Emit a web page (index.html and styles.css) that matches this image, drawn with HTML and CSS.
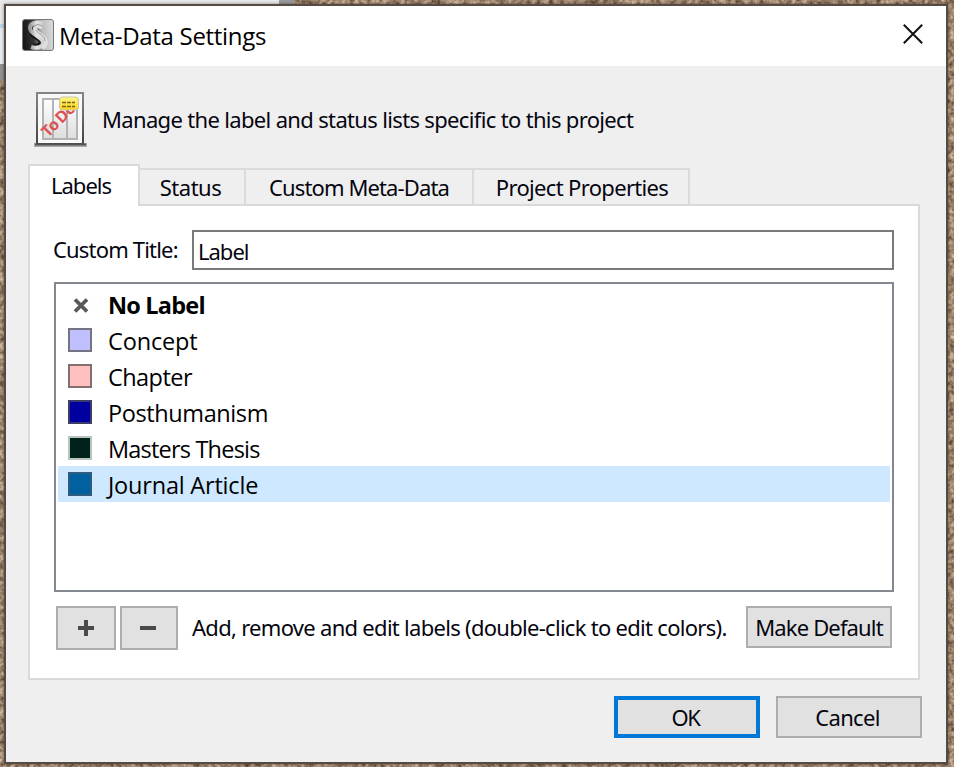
FILE: index.html
```html
<!DOCTYPE html>
<html lang="en">
<head>
<meta charset="utf-8">
<title>Meta-Data Settings</title>
<link rel="stylesheet" href="styles.css">
</head>
<body>
<svg class="cork" width="954" height="767" aria-hidden="true">
  <filter id="grain" x="0" y="0" width="100%" height="100%" color-interpolation-filters="sRGB">
    <feTurbulence type="fractalNoise" baseFrequency="0.22" numOctaves="3" seed="8"/>
    <feColorMatrix values="0.75 0 0 0 0.24  0.72 0 0 0 0.16  0.66 0 0 0 0.1  0 0 0 0 1"/>
  </filter>
  <rect width="954" height="767" filter="url(#grain)"/>
</svg>
<div class="behind"></div>
<main class="dialog">
  <header class="titlebar">
    <svg class="app-icon" width="32" height="32" viewBox="0 0 32 32">
      <defs>
        <linearGradient id="tile" x1="0" x2="1" y1=".55" y2=".45"><stop offset="0" stop-color="#151515"/><stop offset=".35" stop-color="#333"/><stop offset=".65" stop-color="#bcbcbc"/><stop offset="1" stop-color="#dadada"/></linearGradient>
        <linearGradient id="curl" x1="0" x2="1"><stop offset="0" stop-color="#999"/><stop offset=".5" stop-color="#e4e4e4"/><stop offset="1" stop-color="#ccc"/></linearGradient>
      </defs>
      <rect x=".5" y=".5" width="31" height="31" rx="2.5" fill="url(#tile)" stroke="#777"/>
      <path d="M9 14c3 4 10 5 10 9 0 3-3 5-8 4" fill="none" stroke="#151515" stroke-width="5"/>
      <path d="M21 5c-6-3-13-1-13 4 0 7 13 8 13 15 0 4-6 6-12 4" fill="none" stroke="url(#curl)" stroke-width="4"/>
      <path d="M20 9c-3-3-7-2-7 1 1 5 10 6 11 13 0 3-2 5-4 6" fill="none" stroke="#dedede" stroke-width="4"/>
      <path d="M12 8c2-3 6-3 9 0M14 11c2 4 9 5 9 11" fill="none" stroke="#999"/>
    </svg>
    <h1 class="title">Meta-Data Settings</h1>
    <svg class="close" width="20" height="20" viewBox="0 0 20 20"><path d="M.8.8 19.2 19.2M19.2.8.8 19.2" stroke="#111" stroke-width="2"/></svg>
  </header>

  <section class="intro">
    <svg class="todo-icon" width="56" height="58" viewBox="0 0 56 58">
      <defs>
        <linearGradient id="page" x2="0" y2="1"><stop stop-color="#fff"/><stop offset="1" stop-color="#ddd"/></linearGradient>
        <linearGradient id="frame" x2="0" y2="1"><stop stop-color="#858585"/><stop offset="1" stop-color="#444"/></linearGradient>
        <linearGradient id="note" x2="0" y2="1"><stop stop-color="#fff583"/><stop offset="1" stop-color="#ffd321"/></linearGradient>
      </defs>
      <path d="M2 55h53" stroke="#aaa" stroke-width="4"/>
      <rect x="5" y="3" width="46" height="51" fill="#f8f8f8" stroke="url(#frame)" stroke-width="2"/>
      <path d="M3 54.500h51" stroke="#555" stroke-width="2"/>
      <path d="M11 9h34v40H11zM21 9v40M35 9v40" fill="url(#page)" stroke="#b3b3b3" stroke-width="2"/>
      <text class="todo-text" transform="translate(16 48) rotate(-45)">To Do</text>
      <rect x="27.500" y="7" width="19" height="13" rx="3" fill="url(#note)" stroke="#c8c8a6"/>
      <path d="M30 12.500h13M30 16.500h13" stroke="#76640a" stroke-width="1.500" stroke-dasharray="4 1"/>
    </svg>
    <p class="intro-text">Manage the label and status lists specific to this project</p>
  </section>

  <nav class="tabs">
    <div class="tab tab-active"><span class="t-labels">Labels</span></div>
    <div class="tab tab-status"><span class="t-status">Status</span></div>
    <div class="tab tab-custom"><span class="t-custom">Custom Meta-Data</span></div>
    <div class="tab tab-project"><span class="t-project">Project Properties</span></div>
  </nav>

  <section class="panel">
    <div class="field">
      <label class="field-label" for="custom-title">Custom Title:</label>
      <div class="field-box" id="custom-title"><span>Label</span></div>
    </div>
    <ul class="list">
      <li class="row none"><svg class="mark" width="24" height="24" viewBox="0 0 24 24"><path d="M6 6.500 18 18.500M18 6.500 6 18.500" stroke="#585858" stroke-width="3.800"/></svg><span>No Label</span></li>
      <li class="row"><i class="swatch lilac"></i><span class="r-concept">Concept</span></li>
      <li class="row"><i class="swatch pink"></i><span class="r-chapter">Chapter</span></li>
      <li class="row"><i class="swatch navy"></i><span class="r-post">Posthumanism</span></li>
      <li class="row"><i class="swatch green"></i><span class="r-masters">Masters Thesis</span></li>
      <li class="row selected"><i class="swatch blue"></i><span class="r-journal">Journal Article</span></li>
    </ul>
    <div class="actions">
      <div class="button add"><svg width="16" height="16" viewBox="0 0 16 16"><path d="M0 8h16M8 0v16" stroke="#4a4a4a" stroke-width="4"/></svg></div>
      <div class="button remove"><svg width="16" height="16" viewBox="0 0 16 16"><path d="M0 8h16" stroke="#4a4a4a" stroke-width="4"/></svg></div>
      <p class="hint">Add, remove and edit labels (double-click to edit colors).</p>
      <div class="button default"><span>Make Default</span></div>
    </div>
  </section>

  <footer class="footer">
    <div class="button ok"><span>OK</span></div>
    <div class="button cancel"><span>Cancel</span></div>
  </footer>
</main>
</body>
</html>
```
FILE: styles.css
```css
* { box-sizing: border-box; }
body {
  margin: 0;
  width: 954px;
  height: 767px;
  padding: 4px 0 0 4px;
  overflow: hidden;
  background: #947a64;
  font: 22px/30px "Noto Sans", "Open Sans", sans-serif;
  color: #050510;
}
h1, p, ul { margin: 0; padding: 0; font-weight: 400; }
span, p, h1, label { white-space: nowrap; }
svg { display: block; flex: none; }
.cork { position: absolute; left: 0; top: 0; }
.behind {
  position: absolute; left: 0; top: 0; width: 294px; height: 80px;
  border-right: 15px solid #999;
  border-bottom: 16px solid #929292;
  background: linear-gradient(#e8e8e8 0 24px, #b9d5e7 24px 28px, #e5eaf0 28px);
}
.dialog {
  position: relative;
  width: 944px; height: 760px;
  border: 2px solid #554b43;
  background: #efefef;
  box-shadow: 0 0 3px rgba(0, 0, 0, .45);
}
.titlebar { display: flex; height: 60px; padding: 13px 23px 0 16px; background: #fff; }
.title { margin: 0 auto 0 5px; font: 24px/34px "Open Sans", sans-serif; color: #000; letter-spacing: -.3px; }
.close { margin-top: 5px; }
.intro { display: flex; height: 98px; padding: 24px 0 0 26px; }
.intro-text { margin: 14px 0 0 14px; letter-spacing: -.66px; }
.todo-text { font: bold 16px "Noto Sans", sans-serif; fill: #dc5354; word-spacing: -2px; letter-spacing: -.3px; }
.tabs { display: flex; align-items: flex-end; height: 42px; padding-left: 22px; position: relative; z-index: 1; }
.tab {
  display: flex; justify-content: center; align-items: center;
  height: 38px; border: 2px solid #dadada; border-left: 0; background: #efefef;
}
.tab-active { width: 112px; height: 42px; border-left: 2px solid #dadada; border-bottom: 0; background: #fff; padding: 0 6px 2px 0; }
.tab-status { width: 106px; padding-right: 3px; }
.tab-custom { width: 228px; }
.tab-project { width: 216px; padding-left: 2px; }
.t-labels { letter-spacing: -1px; }
.t-status { letter-spacing: -.5px; }
.t-custom { letter-spacing: -.88px; }
.t-project { letter-spacing: -.67px; }
.panel { width: 892px; height: 476px; margin: -2px 0 0 22px; padding: 24px 24px 0; border: 2px solid #dadada; background: #fff; }
.field { display: flex; height: 40px; align-items: center; }
.field-label { width: 138px; margin: -2px 0 0 -1px; letter-spacing: -.82px; flex: none; }
.field-box { flex: 1; height: 40px; border: 2px solid #7a7a7a; padding: 4px 0 0 4px; margin-left: 1px; letter-spacing: -1px; }
.list {
  width: 840px; height: 310px; margin-top: 12px; padding: 2px;
  border: 2px solid #828790; list-style: none;
  font: 23.500px/36px "Open Sans", sans-serif; color: #000;
}
.row { display: flex; align-items: center; height: 36px; padding: 2px 0 0 10px; }
.row span { margin-left: 16px; }
.selected { background: #cde8ff; }
.none { font-weight: 700; letter-spacing: -.8px; }
.r-concept { letter-spacing: -.15px; }
.r-chapter { letter-spacing: -.55px; }
.r-post { letter-spacing: -.4px; }
.r-masters { letter-spacing: -.8px; }
.r-journal { letter-spacing: -.2px; }
.mark { position: relative; left: 1px; }
.swatch { width: 24px; height: 24px; margin-top: -2px; border: 2px solid #737384; flex: none; }
.lilac { background: #c0c0ff; }
.pink { background: #ffc0c0; border-color: #857070; }
.navy { background: #0000a0; border-color: #3c3c69; }
.green { background: #00221c; border-color: #bac5c1; }
.blue { background: #0060a0; border-color: #315c80; }
.actions { display: flex; height: 44px; margin: 14px 0 0 2px; }
.button { display: flex; align-items: center; justify-content: center; flex: none; border: 2px solid #adadad; background: #e1e1e1; }
.add { width: 60px; height: 44px; }
.remove { width: 58px; height: 44px; margin-left: 4px; padding-right: 2px; }
.hint { margin: 6px 0 0 14px; width: 554px; flex: none; letter-spacing: -.71px; }
.default { width: 146px; height: 42px; letter-spacing: -.85px; }
.footer { display: flex; gap: 16px; margin: 16px 0 0 608px; }
.ok { width: 146px; height: 42px; border: 4px solid #0078d7; letter-spacing: -1.500px; padding-right: 3px; }
.cancel { width: 146px; height: 42px; letter-spacing: -.7px; padding-right: 3px; }
```
